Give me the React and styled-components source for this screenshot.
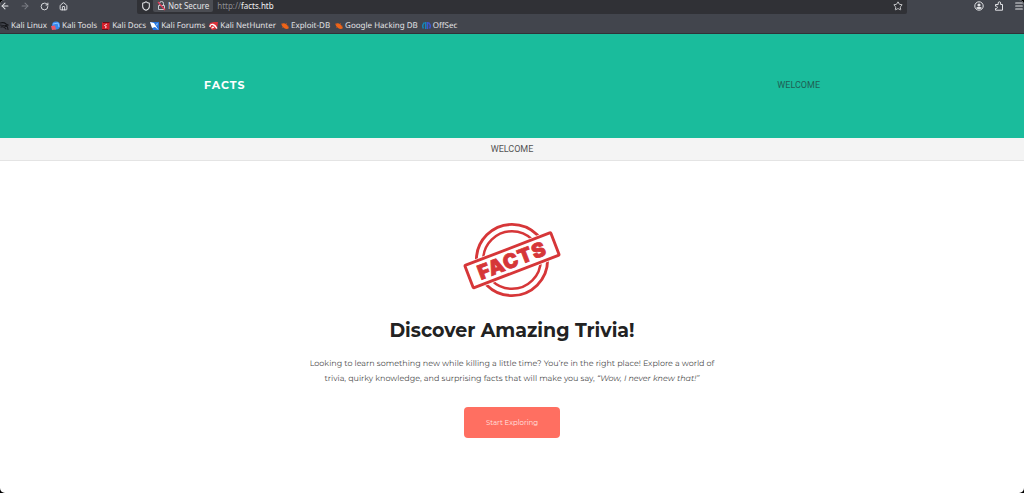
import React from "react";
import styled, { createGlobalStyle } from "styled-components";
import { ArrowLeft, ArrowRight, RotateCw, House, Shield, Star, Menu } from "lucide-react";

const GlobalStyle = createGlobalStyle`
  *, *::before, *::after { box-sizing: border-box; }
  body { margin: 0; background: #000; }
  button, input { font: inherit; }
`;

const Window = styled.div`
  min-height: 100vh;
  display: flex;
  flex-direction: column;
  overflow: hidden;
  border-radius: 5px;
  background: #fff;
  font-family: Montserrat, Inter, sans-serif;
`;

const Chrome = styled.header`
  background: #42454d;
  border-bottom: 1px solid #303238;
  color: #e2e3e6;
  font: 8px/12px "Noto Sans", sans-serif;
`;

const Toolbar = styled.div`
  display: grid;
  grid-template-columns: 137px 1fr 117px;
  height: 14px;
`;

const ToolGroup = styled.div`
  display: flex;
  align-items: center;
  gap: 10px;
  height: 12px;
  justify-content: ${(p) => (p.$end ? "flex-end" : "flex-start")};
`;

const IconButton = styled.button`
  display: flex;
  padding: 0;
  border: 0;
  background: none;
  color: ${(p) => (p.disabled ? "#7c7f86" : "#e2e3e6")};
`;

const AddressBar = styled.form`
  display: flex;
  align-items: center;
  padding: 0 4px 2px;
  border-radius: 0 0 2px 2px;
  background: #303136;
`;

const Security = styled.button`
  display: flex;
  align-items: center;
  gap: 2px;
  height: 12px;
  margin-left: 2px;
  padding: 0 4px;
  border: 0;
  border-radius: 0 0 2px 2px;
  background: #4b4d53;
  color: #e2e3e6;
  white-space: nowrap;
`;

const AddressField = styled.label`
  position: relative;
  flex: 1;
  height: 12px;
  margin-left: 4px;
`;

const AddressInput = styled.input`
  display: block;
  width: 100%;
  height: 12px;
  padding: 0;
  border: 0;
  outline: 0;
  background: none;
  color: transparent;
`;

const AddressText = styled.span`
  position: absolute;
  inset: 0;
  pointer-events: none;
  color: #f1f1f3;
  span { color: #8d8e93; }
`;

const Bookmarks = styled.nav`
  display: flex;
  align-items: center;
  gap: 4px;
  height: 19px;
  padding-top: 5px;
  overflow: hidden;
  text-rendering: geometricPrecision;
`;

const Bookmark = styled.a`
  display: flex;
  align-items: center;
  gap: 2px;
  color: inherit;
  text-decoration: none;
  white-space: nowrap;
  svg { flex: none; }
`;

const Hero = styled.div`
  background: #1abc9c;
  padding: 41px 24px 43px;
`;

const HeroInner = styled.div`
  display: flex;
  align-items: center;
  justify-content: space-between;
  max-width: 616px;
  min-height: 20px;
  margin: 0 auto;
`;

const Brand = styled.a`
  color: #fff;
  font-size: 11px;
  font-weight: 700;
  letter-spacing: 1px;
  text-decoration: none;
`;

const NavLink = styled.a`
  color: ${(p) => (p.$dim ? "#555" : "#1f5f55")};
  font: 9px/12px Roboto, sans-serif;
  text-decoration: none;
`;

const SubNav = styled.nav`
  display: flex;
  align-items: center;
  justify-content: center;
  height: 23px;
  background: #f4f4f4;
  border-bottom: 1px solid #e4e4e4;
`;

const Main = styled.main`
  display: flex;
  flex-direction: column;
  align-items: center;
  padding: 61px 24px 48px;
  text-align: center;
`;

const Title = styled.h1`
  margin: 19px 0 0;
  color: #222;
  font-size: 19px;
  line-height: 28px;
  font-weight: 700;
`;

const Intro = styled.p`
  max-width: 424px;
  margin: 12px 0 0;
  color: #4c4c4c;
  font-size: 8px;
  line-height: 15px;
  text-rendering: geometricPrecision;
`;

const Start = styled.button`
  height: 31px;
  margin-top: 20px;
  padding: 0 22px;
  border: 0;
  border-radius: 4px;
  background: #ff6f61;
  color: #ffe5e0;
  font-size: 7px;
`;

const marks = {
  linux: (
    <g fill="none" stroke="#15161a" strokeLinecap="round">
      <path d="M0 2q4-1 6 1l2 1-2 .5q2 1 2 4M0 4q3 0 6 1.500M1 6q3-1 5 2" strokeWidth="1.100" />
    </g>
  ),
  tools: (
    <g>
      <circle cx="5" cy="4.500" r="4" fill="#3689ef" />
      <path d="M2 3l5-1 1 4" stroke="#8bc4ff" fill="none" />
      <path d="M0 5l4-.5 1 4-4 .5z" fill="#ec5868" />
    </g>
  ),
  docs: (
    <g>
      <path d="M2 1h6.500v7L7 9H1V2z" fill="#d51f29" />
      <path d="M2 1h6.500v1H2zM1 8h6v1H1z" fill="#641018" />
      <path d="M6 3L3.500 4.500 5.500 6 4 7" stroke="#fff" strokeWidth=".8" fill="none" />
    </g>
  ),
  forums: (
    <g>
      <path d="M0 1h9v8H3z" fill="#2275df" />
      <path d="M0 1l4 1 4.500 7L5 6 2 7z" fill="#fff" />
      <path d="M6 3l2-1-1 3z" fill="#9ac9ff" />
    </g>
  ),
  nethunter: (
    <g>
      <path d="M1 2l4-1 4 0-1 7-5 1-3-4z" fill="#dc3038" />
      <path d="M1 6q0-3 3-2.500 2 .5 4 4M3 7.500q0-2 2-1" stroke="#fff" strokeWidth="1.300" fill="none" />
    </g>
  ),
  exploit: (
    <g>
      <path d="M1.500 3Q4 1.500 6.500 3.500t2 4q-2 1-4.500-.5T1.500 3z" fill="#ee6418" />
      <path d="M1 3h2M3 6L2 7M6 3l1-1M7 5h1.500" stroke="#b95123" strokeWidth=".7" />
    </g>
  ),
  offsec: (
    <g fill="none" strokeWidth="1.500">
      <path d="M2.500 1.500Q-.5 4.500 1.500 7.500M3.700 1v7" stroke="#1685b8" />
      <path d="M6.500 1.500Q9.500 4.500 7.500 7.500M5.500 1v7" stroke="#3c56d0" />
    </g>
  ),
};

const bookmarks = [
  ["Kali Linux", "linux"],
  ["Kali Tools", "tools"],
  ["Kali Docs", "docs"],
  ["Kali Forums", "forums"],
  ["Kali NetHunter", "nethunter"],
  ["Exploit-DB", "exploit"],
  ["Google Hacking DB", "exploit"],
  ["OffSec", "offsec"],
];

function BrokenLock() {
  return (
    <svg width="9" height="10" viewBox="0 0 9 10" fill="none" aria-hidden="true">
      <path d="M2.500 4V2.500a2 2 0 0 1 4 0V4M1.500 4.500h6v4h-6z" stroke="#c9cacf" />
      <path d="M1 1l7 8" stroke="#e23655" strokeWidth="1.200" />
    </svg>
  );
}

function AccountIcon() {
  return (
    <svg width="10" height="10" viewBox="0 0 10 10" aria-hidden="true">
      <circle cx="5" cy="5" r="4.200" fill="none" stroke="currentColor" />
      <circle cx="5" cy="4" r="1.600" fill="currentColor" />
      <path d="M2.200 7q.5-1 1.500-1h2.600q1 0 1.500 1Q5 9.500 2.200 7z" fill="currentColor" />
    </svg>
  );
}

function ExtensionIcon() {
  return (
    <svg width="10" height="10" viewBox="0 0 10 10" fill="none" aria-hidden="true">
      <path d="M1.500 4V3.500h2.700V2a1.200 1.200 0 0 1 2.400 0v1.500h1.900v5.700h-7V7.500h1a1.200 1.200 0 0 0 0-2.300h-1z" stroke="currentColor" strokeLinejoin="round" />
    </svg>
  );
}

function Stamp() {
  return (
    <svg width="98" height="76" viewBox="0 0 98 76" role="img" aria-label="Facts">
      <g fill="none" stroke="#d63638">
        <circle cx="49" cy="38" r="35.600" strokeWidth="2.900" />
        <circle cx="49" cy="38" r="28.800" strokeWidth="2.500" />
      </g>
      <g transform="translate(49 38.300) rotate(-21)">
        <rect x="-48" y="-14.200" width="96" height="28.400" fill="#fff" />
        <rect x="-46" y="-12" width="92" height="24" rx="1" fill="#fff" stroke="#d63638" strokeWidth="2.900" />
        <text y="7.200" textAnchor="middle" fill="#d63638" stroke="#d63638" strokeWidth=".8" fontFamily="Inter, sans-serif" fontSize="20" fontWeight="900" letterSpacing="1">FACTS</text>
      </g>
    </svg>
  );
}

export default function App() {
  return (
    <Window>
      <GlobalStyle />
      <Chrome>
        <Toolbar>
          <ToolGroup>
            <IconButton aria-label="Back"><ArrowLeft size={10} strokeWidth={2.5} /></IconButton>
            <IconButton aria-label="Forward" disabled><ArrowRight size={10} strokeWidth={2.5} /></IconButton>
            <IconButton aria-label="Reload"><RotateCw size={9} strokeWidth={2.5} /></IconButton>
            <IconButton aria-label="Home"><House size={9} strokeWidth={2.5} /></IconButton>
          </ToolGroup>
          <AddressBar onSubmit={(e) => e.preventDefault()}>
            <Shield size={10} strokeWidth={2.5} />
            <Security type="button"><BrokenLock />Not Secure</Security>
            <AddressField>
              <AddressInput aria-label="Address" defaultValue="http://facts.htb" />
              <AddressText aria-hidden="true"><span>http://</span>facts.htb</AddressText>
            </AddressField>
            <IconButton type="button" aria-label="Bookmark this page"><Star size={10} strokeWidth={2} /></IconButton>
          </AddressBar>
          <ToolGroup $end>
            <IconButton aria-label="Account"><AccountIcon /></IconButton>
            <IconButton aria-label="Extensions"><ExtensionIcon /></IconButton>
            <IconButton aria-label="Menu"><Menu size={10} strokeWidth={2.5} /></IconButton>
          </ToolGroup>
        </Toolbar>
        <Bookmarks aria-label="Bookmarks">
          {bookmarks.map(([label, mark]) => (
            <Bookmark href="#" key={label}>
              <svg width="9" height="10" viewBox="0 0 9 10" aria-hidden="true">{marks[mark]}</svg>
              {label}
            </Bookmark>
          ))}
        </Bookmarks>
      </Chrome>
      <Hero>
        <HeroInner>
          <Brand href="#">FACTS</Brand>
          <NavLink href="#">WELCOME</NavLink>
        </HeroInner>
      </Hero>
      <SubNav><NavLink href="#" $dim>WELCOME</NavLink></SubNav>
      <Main>
        <Stamp />
        <Title>Discover Amazing Trivia!</Title>
        <Intro>
          Looking to learn something new while killing a little time? You’re in the right place! Explore a world of trivia, quirky knowledge, and surprising facts that will make you say, <em>“Wow, I never knew that!”</em>
        </Intro>
        <Start>Start Exploring</Start>
      </Main>
    </Window>
  );
}
